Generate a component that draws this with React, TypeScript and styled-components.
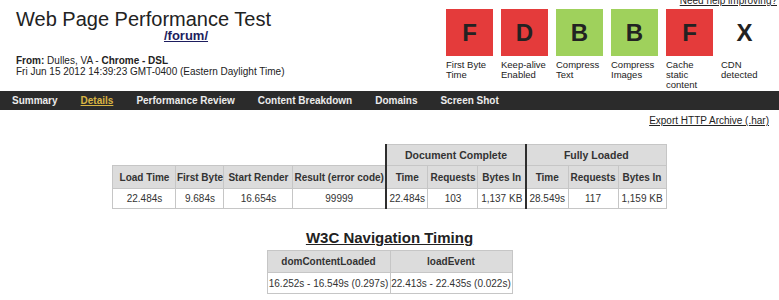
import styled, { createGlobalStyle } from 'styled-components';

const GlobalStyle = createGlobalStyle`
  body {
    margin: 0;
    background: #ffffff;
    font-family: "Liberation Sans", Arial, sans-serif;
    color: #222222;
  }
`;

type Grade = { letter: string; label: string; color?: string };

const RED = '#e43b3b';
const GREEN = '#9fd15c';

const grades: Grade[] = [
  { letter: 'F', label: 'First Byte Time', color: RED },
  { letter: 'D', label: 'Keep-alive Enabled', color: RED },
  { letter: 'B', label: 'Compress Text', color: GREEN },
  { letter: 'B', label: 'Compress Images', color: GREEN },
  { letter: 'F', label: 'Cache static content', color: RED },
  { letter: 'X', label: 'CDN detected' },
];

const tabs = ['Summary', 'Details', 'Performance Review', 'Content Breakdown', 'Domains', 'Screen Shot'];

const summaryCols = [
  { title: 'Load Time', width: 63, value: '22.484s' },
  { title: 'First Byte', width: 48, value: '9.684s' },
  { title: 'Start Render', width: 69, value: '16.654s' },
  { title: 'Result (error code)', width: 93, value: '99999' },
  { title: 'Time', width: 42, value: '22.484s', divider: true },
  { title: 'Requests', width: 50, value: '103' },
  { title: 'Bytes In', width: 48, value: '1,137 KB' },
  { title: 'Time', width: 42, value: '28.549s', divider: true },
  { title: 'Requests', width: 50, value: '117' },
  { title: 'Bytes In', width: 48, value: '1,159 KB' },
];

export default function App() {
  return (
    <Page>
      <GlobalStyle />
      <Header>
        <Intro>
          <Title>Web Page Performance Test</Title>
          <PageLink href="#">/forum/</PageLink>
          <Meta>
            <b>From:</b> Dulles, VA - <b>Chrome - DSL</b>
            <br />
            Fri Jun 15 2012 14:39:23 GMT-0400 (Eastern Daylight Time)
          </Meta>
        </Intro>
        <GradePanel>
          <HelpLink href="#">Need help improving?</HelpLink>
          <GradeRow>
            {grades.map((g) => (
              <GradeCell key={g.label}>
                <GradeBox $color={g.color}>{g.letter}</GradeBox>
                <GradeLabel>{g.label}</GradeLabel>
              </GradeCell>
            ))}
          </GradeRow>
        </GradePanel>
      </Header>

      <Nav>
        {tabs.map((t) => (
          <NavItem key={t} href="#" $active={t === 'Details'}>
            {t}
          </NavItem>
        ))}
      </Nav>

      <Toolbar>
        <PlainLink href="#">Export HTTP Archive (.har)</PlainLink>
      </Toolbar>

      <ResultTable>
        <colgroup>
          {summaryCols.map((c, i) => (
            <col key={i} style={{ width: c.width }} />
          ))}
        </colgroup>
        <thead>
          <GroupRow>
            <Blank colSpan={4} />
            <Th colSpan={3} $divider>
              Document Complete
            </Th>
            <Th colSpan={3} $divider>
              Fully Loaded
            </Th>
          </GroupRow>
          <HeadRow>
            {summaryCols.map((c, i) => (
              <Th key={i} $divider={c.divider}>
                {c.title}
              </Th>
            ))}
          </HeadRow>
        </thead>
        <tbody>
          <DataRow>
            {summaryCols.map((c, i) => (
              <Td key={i} $divider={c.divider}>
                {c.value}
              </Td>
            ))}
          </DataRow>
        </tbody>
      </ResultTable>

      <SectionTitle>W3C Navigation Timing</SectionTitle>
      <TimingTable>
        <colgroup>
          <col style={{ width: 123 }} />
          <col style={{ width: 122 }} />
        </colgroup>
        <thead>
          <TimingHeadRow>
            <Th>domContentLoaded</Th>
            <Th>loadEvent</Th>
          </TimingHeadRow>
        </thead>
        <tbody>
          <TimingDataRow>
            <Td>16.252s - 16.549s (0.297s)</Td>
            <Td>22.413s - 22.435s (0.022s)</Td>
          </TimingDataRow>
        </tbody>
      </TimingTable>
    </Page>
  );
}

const Page = styled.div`
  width: 779px;
  font-family: "Liberation Sans", Arial, sans-serif;
`;

const Header = styled.header`
  height: 91px;
  display: flex;
  justify-content: space-between;
  overflow: hidden;
`;

const Intro = styled.div`
  padding: 9px 0 0 16px;
`;

const Title = styled.h1`
  margin: 0;
  font-size: 20px;
  line-height: 20px;
  font-weight: normal;
  color: #222222;
`;

const PageLink = styled.a`
  display: block;
  width: 340px;
  text-align: center;
  font-size: 13px;
  line-height: 14px;
  font-weight: bold;
  color: #1d1d5e;
  text-decoration: underline;
`;

const Meta = styled.div`
  margin-top: 12px;
  font-size: 10px;
  line-height: 11px;
  color: #222222;
`;

const GradePanel = styled.div`
  display: flex;
  flex-direction: column;
  align-items: flex-end;
  padding-right: 2px;
`;

const HelpLink = styled.a`
  margin-top: -4px;
  font-size: 10px;
  line-height: 10px;
  color: #222222;
  text-decoration: underline;
`;

const GradeRow = styled.div`
  margin: 3px 9px 0 0;
  display: flex;
  gap: 8px;
`;

const GradeCell = styled.div`
  width: 47px;
  display: flex;
  flex-direction: column;
`;

const GradeBox = styled.div<{ $color?: string }>`
  width: 47px;
  height: 47px;
  display: flex;
  align-items: center;
  justify-content: center;
  background: ${(p) => p.$color || 'transparent'};
  font-size: 24px;
  font-weight: bold;
  color: #222222;
`;

const GradeLabel = styled.div`
  margin-top: 4px;
  font-size: 9.5px;
  line-height: 10px;
  color: #222222;
`;

const Nav = styled.nav`
  height: 19px;
  padding-left: 0.5px;
  display: flex;
  align-items: center;
  background: #2b2b2b;
`;

const NavItem = styled.a<{ $active?: boolean }>`
  padding: 0 11.5px;
  font-size: 10px;
  font-weight: bold;
  color: ${(p) => (p.$active ? '#d8b443' : '#ececec')};
  text-decoration: ${(p) => (p.$active ? 'underline' : 'none')};
  white-space: nowrap;
`;

const Toolbar = styled.div`
  padding: 5px 10px 0;
  display: flex;
  justify-content: flex-end;
  font-size: 10px;
  line-height: 12px;
`;

const PlainLink = styled.a`
  color: #222222;
  text-decoration: underline;
`;

const ResultTable = styled.table`
  margin: 17px auto 0;
  width: 553px;
  table-layout: fixed;
  border-collapse: collapse;
  font-size: 10px;
  color: #333333;
`;

const Th = styled.th<{ $divider?: boolean }>`
  padding: 0;
  background: #dcdcdc;
  border: 1px solid #c6c6c6;
  ${(p) => p.$divider && 'border-left: 2px solid #2e2e2e;'}
  font-weight: bold;
  text-align: center;
  white-space: nowrap;
`;

const Td = styled.td<{ $divider?: boolean }>`
  padding: 0;
  background: #ffffff;
  border: 1px solid #c6c6c6;
  ${(p) => p.$divider && 'border-left: 2px solid #2e2e2e;'}
  text-align: center;
  white-space: nowrap;
`;

const Blank = styled.td`
  border: none;
`;

const GroupRow = styled.tr`
  height: 21px;
  font-size: 10.5px;
`;

const HeadRow = styled.tr`
  height: 23px;
`;

const DataRow = styled.tr`
  height: 20px;
`;

const SectionTitle = styled.h2`
  margin: 20px 0 0;
  font-size: 15px;
  line-height: 18px;
  font-weight: bold;
  text-align: center;
  text-decoration: underline;
  color: #222222;
`;

const TimingTable = styled(ResultTable)`
  margin-top: 3px;
  width: 245px;
`;

const TimingHeadRow = styled.tr`
  height: 22px;
`;

const TimingDataRow = styled.tr`
  height: 21px;
`;
